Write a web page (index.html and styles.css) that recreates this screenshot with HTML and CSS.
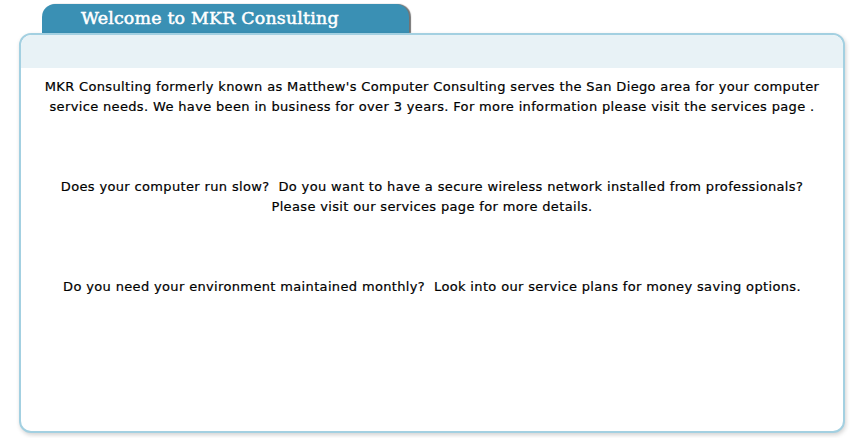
FILE: index.html
```html
<!DOCTYPE html>
<html>
<head>
<meta charset="utf-8">
<link rel="stylesheet" href="styles.css">
</head>
<body>
<div class="page">
  <div class="tab"><h1 class="tab-title">Welcome to MKR Consulting</h1></div>
  <div class="panel">
    <div class="panel-band"></div>
    <div class="panel-body">
      <p class="para">MKR Consulting formerly known as Matthew's Computer Consulting serves the San Diego area for your computer service needs. We have been in business for over 3 years. For more information please visit the services page .</p>
      <p class="para">Does your computer run slow?&nbsp; Do you want to have a secure wireless network installed from professionals?<br>Please visit our services page for more details.</p>
      <p class="para">Do you need your environment maintained monthly?&nbsp; Look into our service plans for money saving options.</p>
    </div>
  </div>
</div>
</body>
</html>
```
FILE: styles.css
```css
html, body {
  margin: 0;
  padding: 0;
  background: #ffffff;
}
.page {
  width: 853px;
  height: 438px;
  padding-top: 4px;
  box-sizing: border-box;
}
.tab {
  margin-left: 42px;
  width: 367px;
  height: 29px;
  background: #3a90b4;
  border-radius: 13px 13px 0 0;
  box-shadow: 2px 0 1px rgba(0,0,0,0.55);
  box-sizing: border-box;
  padding-left: 39px;
}
.tab-title {
  margin: 0;
  font-family: "DejaVu Serif", "Liberation Serif", serif;
  font-weight: normal;
  font-size: 17.4px;
  line-height: 29px;
  color: #ffffff;
  letter-spacing: 0.2px;
  -webkit-text-stroke: 0.5px #ffffff;
}
.panel {
  margin-left: 19px;
  width: 826px;
  height: 400px;
  box-sizing: border-box;
  border: 2px solid #a3d0e1;
  border-radius: 12px;
  background: #ffffff;
  box-shadow: 1px 2px 4px rgba(0,0,0,0.18);
  overflow: hidden;
}
.panel-band {
  height: 33px;
  background: #e8f2f6;
  border-radius: 10px 10px 0 0;
}
.panel-body {
  padding: 9px 8px 0;
}
.para {
  margin: 0 0 60px;
  font-family: "DejaVu Sans", Verdana, sans-serif;
  font-size: 13px;
  line-height: 20px;
  letter-spacing: 0.35px;
  color: #000000;
  text-align: center;
  -webkit-text-stroke: 0.2px #000000;
}
```
